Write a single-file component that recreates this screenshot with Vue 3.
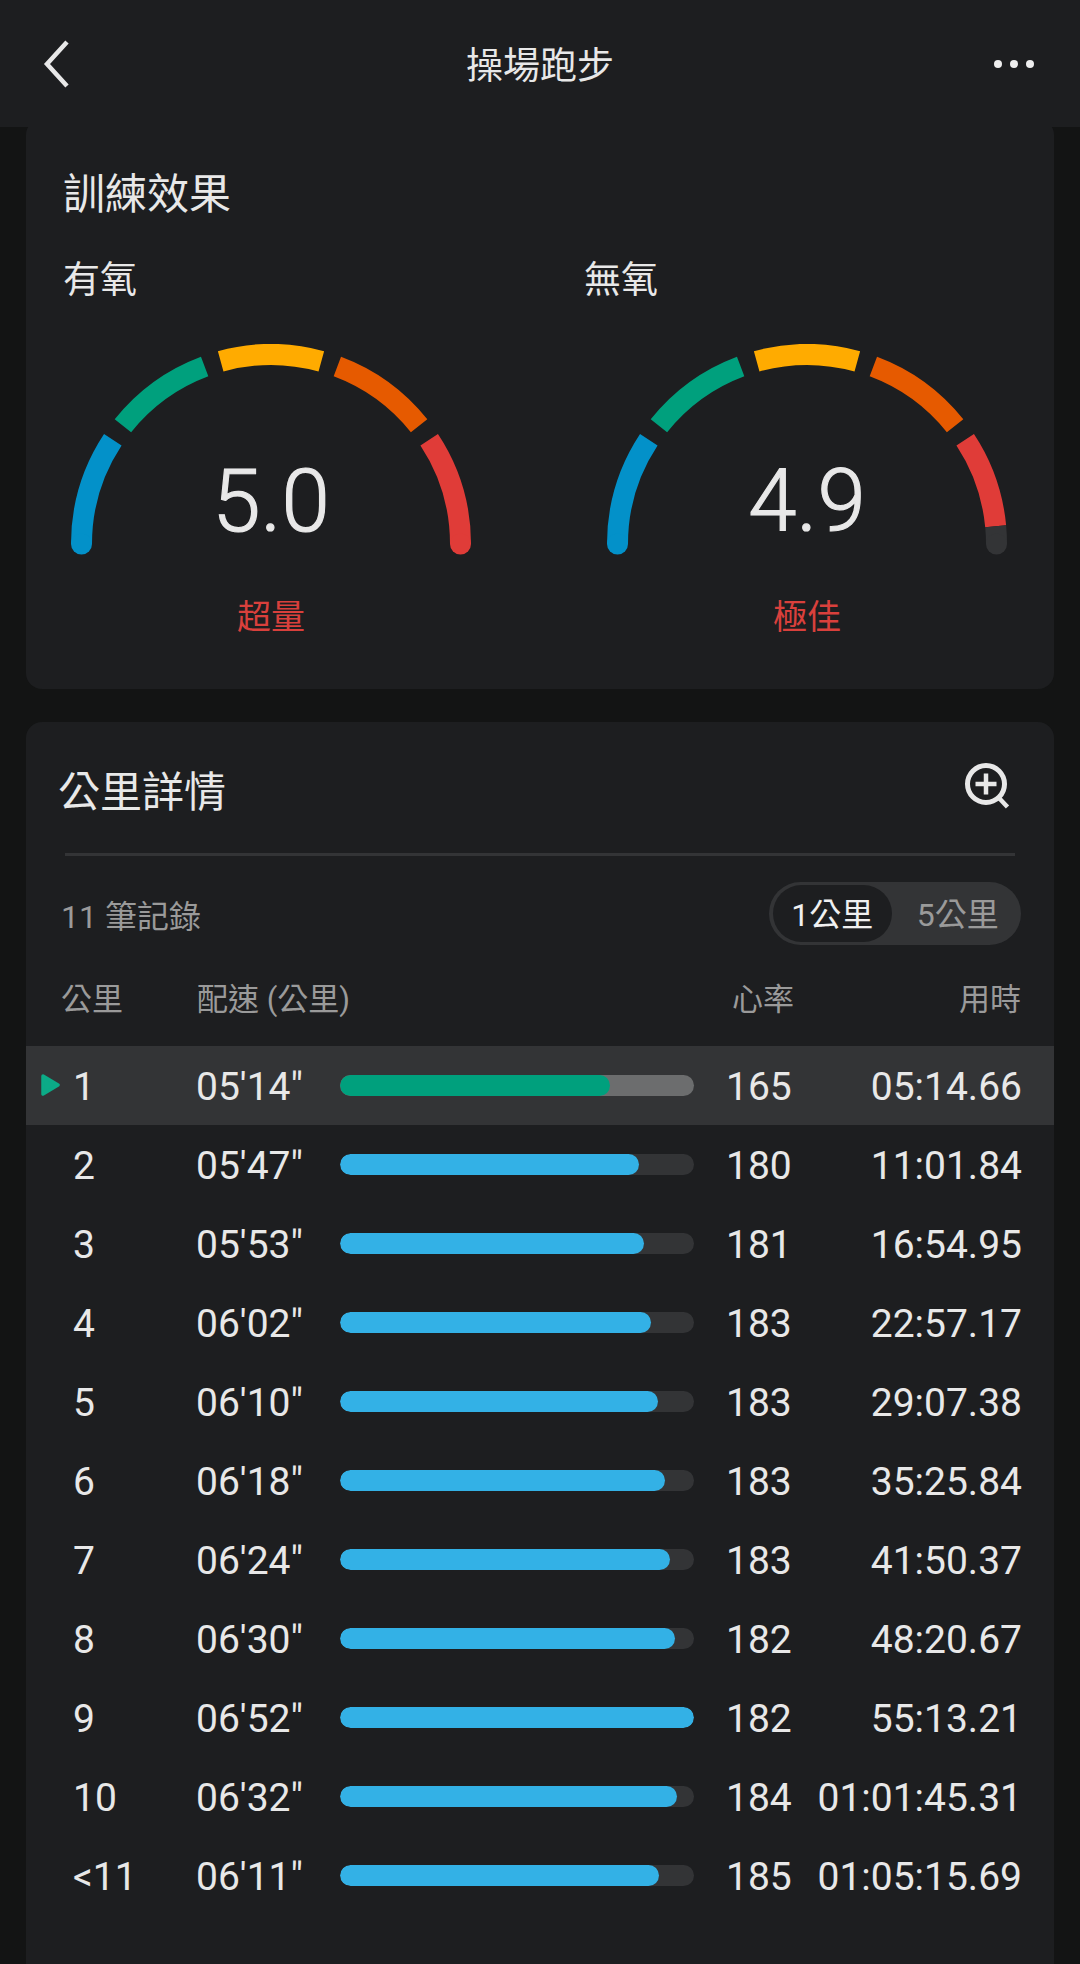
<template>
  <div class="page">
    <header class="top-bar">
      <svg class="back" width="28" height="48" viewBox="0 0 28 48">
        <path d="M24 2 L4 24 L24 46" fill="none" stroke="#e8e8e8" stroke-width="4.5" />
      </svg>
      <div class="top-title">操場跑步</div>
      <svg class="more" width="40" height="10" viewBox="0 0 40 10">
        <circle cx="4" cy="5" r="4" fill="#eee" />
        <circle cx="20" cy="5" r="4" fill="#eee" />
        <circle cx="36" cy="5" r="4" fill="#eee" />
      </svg>
    </header>

    <section class="card effect">
      <div class="card-title">訓練效果</div>
      <div class="gauges">
        <div v-for="g in gauges" :key="g.label" class="gauge">
          <div class="gauge-label">{{ g.label }}</div>
          <div class="gauge-dial">
            <svg width="400" height="212" viewBox="0 0 400 212">
              <path
                v-for="(seg, i) in g.segments"
                :key="i"
                :d="arc(seg.from, seg.to)"
                :stroke="seg.color"
                stroke-width="21"
                fill="none"
              />
              <circle cx="10.5" cy="200" r="10.5" :fill="g.segments[0].color" />
              <circle cx="389.5" cy="200" r="10.5" :fill="g.segments[g.segments.length - 1].color" />
            </svg>
            <div class="gauge-value">{{ g.value }}</div>
          </div>
          <div class="gauge-state">{{ g.state }}</div>
        </div>
      </div>
    </section>

    <section class="card laps">
      <div class="laps-head">
        <div class="card-title">公里詳情</div>
        <svg width="46" height="46" viewBox="0 0 46 46">
          <circle cx="22" cy="21" r="18.5" fill="none" stroke="#e8e8e8" stroke-width="5" />
          <path d="M11.5 21 H32.5 M22 10.5 V31.5" stroke="#e8e8e8" stroke-width="4.5" fill="none" />
          <path d="M35 35 L43.5 44" stroke="#e8e8e8" stroke-width="4.5" fill="none" />
        </svg>
      </div>
      <div class="divider"></div>

      <div class="laps-tools">
        <div class="records">11 筆記錄</div>
        <div class="toggle">
          <div class="toggle-item active">1公里</div>
          <div class="toggle-item">5公里</div>
        </div>
      </div>

      <div class="table-head">
        <div>公里</div>
        <div>配速 (公里)</div>
        <div>心率</div>
        <div class="time">用時</div>
      </div>

      <div
        v-for="(row, i) in rows"
        :key="row.km"
        class="row"
        :class="{ selected: i === 0 }"
      >
        <svg v-if="i === 0" class="marker" width="19" height="22" viewBox="0 0 19 22">
          <path d="M2 2 L17 11 L2 20 Z" fill="#0cab87" stroke="#0cab87" stroke-width="3.5" stroke-linejoin="round" />
        </svg>
        <div class="cell km">{{ row.km }}</div>
        <div class="cell pace">{{ row.pace }}</div>
        <div class="track">
          <div class="fill" :style="{ width: row.pct + '%' }"></div>
        </div>
        <div class="cell hr">{{ row.hr }}</div>
        <div class="cell time">{{ row.time }}</div>
      </div>
    </section>
  </div>
</template>

<script setup>
const baseSegments = [
  { from: 0, to: 33.4, color: '#0391c9' },
  { from: 38.6, to: 69.5, color: '#00a07d' },
  { from: 74.6, to: 105.4, color: '#ffab00' },
  { from: 110.5, to: 141.4, color: '#e65a00' }
]

const gauges = [
  {
    label: '有氧',
    value: '5.0',
    state: '超量',
    segments: [...baseSegments, { from: 146.6, to: 180, color: '#e03c38' }]
  },
  {
    label: '無氧',
    value: '4.9',
    state: '極佳',
    segments: [
      ...baseSegments,
      { from: 146.6, to: 174.6, color: '#e03c38' },
      { from: 174.6, to: 180, color: '#333436' }
    ]
  }
]

const rows = [
  { km: '1', pace: `05'14"`, pct: 76.3, hr: 165, time: '05:14.66' },
  { km: '2', pace: `05'47"`, pct: 84.4, hr: 180, time: '11:01.84' },
  { km: '3', pace: `05'53"`, pct: 86, hr: 181, time: '16:54.95' },
  { km: '4', pace: `06'02"`, pct: 87.8, hr: 183, time: '22:57.17' },
  { km: '5', pace: `06'10"`, pct: 89.8, hr: 183, time: '29:07.38' },
  { km: '6', pace: `06'18"`, pct: 91.8, hr: 183, time: '35:25.84' },
  { km: '7', pace: `06'24"`, pct: 93.2, hr: 183, time: '41:50.37' },
  { km: '8', pace: `06'30"`, pct: 94.6, hr: 182, time: '48:20.67' },
  { km: '9', pace: `06'52"`, pct: 100, hr: 182, time: '55:13.21' },
  { km: '10', pace: `06'32"`, pct: 95.2, hr: 184, time: '01:01:45.31' },
  { km: '<11', pace: `06'11"`, pct: 90.2, hr: 185, time: '01:05:15.69' }
]

// angle 0 is the left end of the dial, 180 the right end
function arc(from, to) {
  const r = 189.5
  const point = (deg) => {
    const a = (deg * Math.PI) / 180
    return `${(200 - r * Math.cos(a)).toFixed(2)} ${(200 - r * Math.sin(a)).toFixed(2)}`
  }
  return `M${point(from)} A${r} ${r} 0 0 1 ${point(to)}`
}
</script>

<style scoped>
.page {
  width: 1080px;
  height: 1964px;
  overflow: hidden;
  background: #131414;
  color: #e8e8e8;
  font-family: Roboto, "Noto Sans CJK TC", sans-serif;
}

.top-bar {
  position: relative;
  z-index: 1;
  height: 127px;
  display: flex;
  align-items: flex-start;
  justify-content: space-between;
  background: #1d1e20;
}

.back {
  margin: 40px 0 0 43px;
}

.top-title {
  font-size: 37px;
  line-height: 52px;
  margin-top: 41px;
  margin-left: 15px;
}

.more {
  margin: 59px 46px 0 0;
}

.card {
  margin: 0 26px;
  background: #1d1e20;
  border-radius: 16px;
}

.effect {
  margin-top: -8px;
  height: 570px;
  box-sizing: border-box;
  padding: 46px 37px 0;
}

.card-title {
  font-size: 42px;
  line-height: 60px;
}

.gauges {
  display: flex;
  margin-top: 30px;
}

.gauge {
  width: 521px;
  flex: none;
}

.gauge-label {
  font-size: 37px;
  line-height: 52px;
}

.gauge-dial {
  position: relative;
  width: 400px;
  height: 212px;
  margin-top: 37px;
  margin-left: 8px;
}

.gauge + .gauge .gauge-dial,
.gauge + .gauge .gauge-state {
  margin-left: 23px;
}

.gauge-value {
  position: absolute;
  left: 0;
  right: 0;
  top: 107px;
  text-align: center;
  font-size: 87px;
  line-height: 100px;
  font-weight: 300;
  -webkit-text-stroke: 1.2px #e8e8e8;
}

.gauge-state {
  width: 400px;
  margin-top: 36px;
  margin-left: 8px;
  text-align: center;
  font-size: 34px;
  line-height: 50px;
  color: #d9403c;
}

.laps {
  margin-top: 33px;
  height: 1260px;
}

.laps-head {
  display: flex;
  justify-content: space-between;
  align-items: flex-start;
  padding: 41px 44px 0 32px;
}

.divider {
  height: 3px;
  margin: 30px 39px 0;
  background: #333436;
}

.laps-tools {
  display: flex;
  justify-content: space-between;
  align-items: center;
  padding: 26px 33px 0 35px;
}

.records {
  font-size: 32px;
  color: #9a9a9a;
}

.toggle {
  display: flex;
  align-items: center;
  width: 252px;
  height: 63px;
  padding: 0 4px;
  box-sizing: border-box;
  border-radius: 32px;
  background: #333436;
  font-size: 32px;
  color: #9a9a9a;
}

.toggle-item {
  width: 119px;
  height: 57px;
  line-height: 60px;
  text-align: center;
  border-radius: 29px;
  white-space: nowrap;
}

.toggle-item + .toggle-item {
  margin-left: 7px;
}

.toggle-item.active {
  background: #1d1e20;
  color: #f0f0f0;
}

.table-head {
  display: grid;
  grid-template-columns: 136px 535px 1fr auto;
  align-items: center;
  height: 99px;
  padding: 2px 33px 0 35px;
  font-size: 31px;
  color: #9a9a9a;
}

.row {
  position: relative;
  display: grid;
  grid-template-columns: 123px 144px 354px 32px 1fr;
  align-items: center;
  height: 79px;
  padding: 0 32px 0 47px;
  font-size: 39px;
}

.row .cell {
  padding-top: 3px;
}

.row.selected {
  background: #333436;
}

.marker {
  position: absolute;
  left: 15px;
  top: 28px;
}

.track {
  height: 21px;
  border-radius: 11px;
  background: #333436;
  overflow: hidden;
}

.selected .track {
  background: #6c6d6e;
}

.fill {
  height: 100%;
  border-radius: 11px;
  background: #33b1e6;
}

.selected .fill {
  background: #00a07d;
}

.hr {
  grid-column: 5;
  grid-row: 1;
  justify-self: start;
}

.time {
  text-align: right;
}

.row .time {
  grid-column: 5;
  grid-row: 1;
  justify-self: end;
}
</style>
